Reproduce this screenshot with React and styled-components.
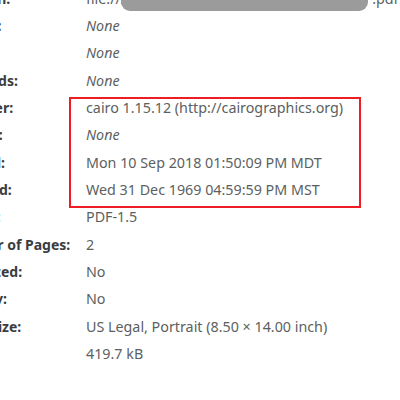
import React from 'react';
import styled, { createGlobalStyle } from 'styled-components';

const GlobalStyle = createGlobalStyle`
  html, body {
    margin: 0;
    padding: 0;
    background: #ffffff;
    overflow: hidden;
  }
  body {
    width: 400px;
    height: 400px;
  }
`;

const rows = [
  { label: 'Location:', value: 'location' },
  { label: 'Subject:', value: 'None', none: true },
  { label: 'Author:', value: 'None', none: true },
  { label: 'Keywords:', value: 'None', none: true },
  { label: 'Producer:', value: 'cairo 1.15.12 (http://cairographics.org)' },
  { label: 'Creator:', value: 'None', none: true },
  { label: 'Created:', value: 'Mon 10 Sep 2018 01:50:09 PM MDT' },
  { label: 'Modified:', value: 'Wed 31 Dec 1969 04:59:59 PM MST' },
  { label: 'Format:', value: 'PDF-1.5' },
  { label: 'Number of Pages:', value: '2' },
  { label: 'Optimized:', value: 'No' },
  { label: 'Security:', value: 'No' },
  { label: 'Paper Size:', value: 'US Legal, Portrait (8.50 × 14.00 inch)' },
  { label: 'Size:', value: '419.7 kB' },
];

const App = () => {
  return (
    <>
      <GlobalStyle />
      <Sheet>
        {rows.map((row) => (
          <React.Fragment key={row.label}>
            <Label>{row.label}</Label>
            {row.value === 'location' ? (
              <Value>
                file:///
                <Redacted />
                .pdf
              </Value>
            ) : (
              <Value $none={row.none}>{row.value}</Value>
            )}
          </React.Fragment>
        ))}
        <Highlight />
      </Sheet>
    </>
  );
};

const Sheet = styled.div`
  position: relative;
  display: grid;
  grid-template-columns: 140px 1fr;
  grid-auto-rows: 27.33px;
  align-items: center;
  margin: -15px 0 0 -54px;
  font-family: 'Noto Sans', 'Open Sans', sans-serif;
  line-height: 18px;
`;

const Label = styled.div`
  font-size: 14px;
  font-weight: bold;
  color: #3a3d3f;
  white-space: nowrap;
`;

const Value = styled.div`
  display: flex;
  align-items: center;
  white-space: nowrap;
  font-size: 14.3px;
  color: #5c5f61;
  font-style: ${(p) => (p.$none ? 'italic' : 'normal')};
`;

const Redacted = styled.span`
  display: inline-block;
  flex-shrink: 0;
  width: 247px;
  height: 24px;
  margin: 0 4px 0 -5px;
  background: #9b9b9b;
  border-radius: 9px;
`;

const Highlight = styled.div`
  position: absolute;
  top: 112px;
  left: 123px;
  width: 292px;
  height: 111px;
  box-sizing: border-box;
  border: 2px solid #ee1c24;
  pointer-events: none;
`;

export default App;
